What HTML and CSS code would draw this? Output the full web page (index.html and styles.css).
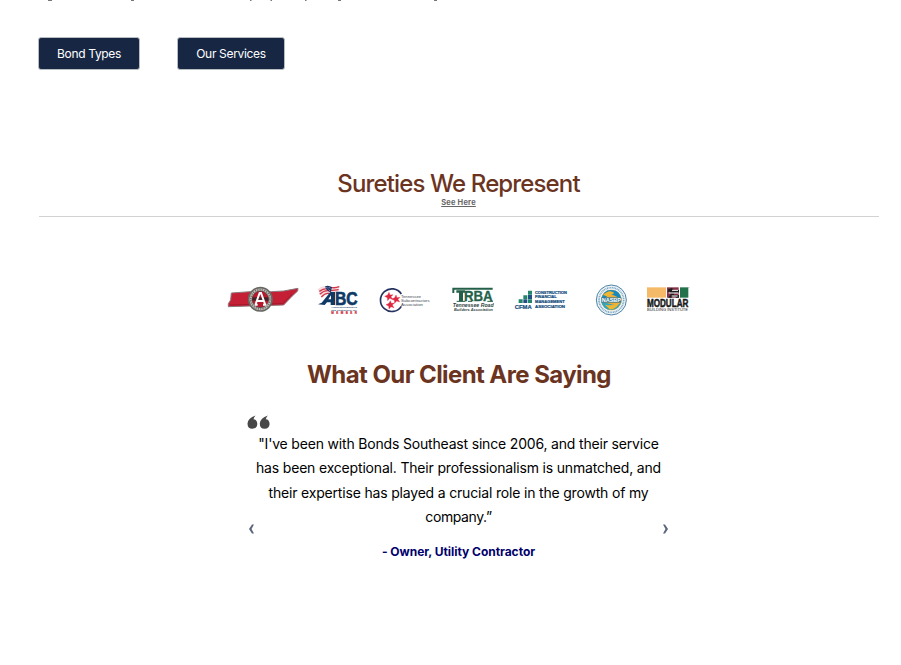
FILE: index.html
```html
<!DOCTYPE html>
<html lang="en">
<head>
<meta charset="utf-8">
<title>Bonds Southeast</title>
<link rel="stylesheet" href="styles.css">
</head>
<body>
<main class="page">
  <svg class="descenders" width="420" height="1" viewBox="39 0 420 1" aria-hidden="true"><path d="M48 .5h4M131 .5h3M250 .5h1.500M270.500 .5h1.500M305 .5h1.500M338 .5h3M434 .5h3" stroke="#777"/></svg>
  <div class="actions">
    <a class="button types">Bond Types</a>
    <a class="button services">Our Services</a>
  </div>
  <section class="sureties">
    <h2 class="sureties-title">Sureties We Represent</h2>
    <a class="see-here">See Here</a>
  </section>
  <div class="logos">
    <svg width="82" height="40" viewBox="18 15 246 120">
      <path d="M34 54L91 50L155 50L191 48L234 40L233 48L216 64L191 90L25 95L25 86L32 75Z" fill="#c51f35" stroke="#8b7579" stroke-width="3"/>
      <path d="M31 90L188 86L217 57" fill="none" stroke="#a1182b" stroke-width="3"/>
      <circle cx="121" cy="73" r="35" fill="#c8c3be" stroke="#686862" stroke-width="5"/>
      <circle cx="121" cy="73" r="29" fill="none" stroke="#77736e" stroke-width="5" stroke-dasharray="4 3"/>
      <circle cx="121" cy="73" r="25" fill="#b7182c" stroke="#444" stroke-width="2"/>
      <path d="M97 72h48" stroke="#412329" stroke-width="10"/>
      <path d="M104 89h9M107 87L119 54h4L135 87M129 89h10M112 78h18" fill="none" stroke="#fff" stroke-width="6"/>
    </svg>
    <svg width="60" height="40" viewBox="-6 15 180 120">
      <path d="M23 43Q38 28 56 35T88 32L84 54Q68 49 55 55T36 68Z" fill="#f4dce0"/>
      <path d="M28 49Q45 37 61 43M29 58Q45 44 59 48M34 66Q47 52 59 56M62 37Q75 40 88 35M62 47L86 44" fill="none" stroke="#d23648" stroke-width="4"/>
      <path d="M45 34Q56 29 66 37L62 53L50 44Z" fill="#1d3769"/>
      <path d="M50 37l3 3M57 37l3 3M56 44l3 3" stroke="#fff" stroke-width="2"/>
      <path d="M24 88L35 83L61 51H75V90H62V82H51L44 90ZM63 61L55 73H63Z" fill="#103966" fill-rule="evenodd"/>
      <text class="logo-sans" x="75" y="89" font-size="54" textLength="68" lengthAdjust="spacingAndGlyphs" fill="#103966" stroke="#103966" stroke-width="2">BC</text>
      <text class="logo-sans" x="64" y="99" font-size="7" textLength="77" lengthAdjust="spacingAndGlyphs" fill="#365477">Associated Builders</text>
      <text class="logo-sans" x="64" y="108" font-size="7" textLength="78" lengthAdjust="spacingAndGlyphs" fill="#365477">and Contractors, Inc.</text>
      <text class="logo-sans" x="64" y="118" font-size="9" textLength="77" fill="#d41f37" stroke="#d41f37" stroke-width=".5">MEMBER</text>
    </svg>
    <svg width="72" height="40" viewBox="-6 15 216 120">
      <path d="M94 57A34 34 0 1 0 94 94" fill="none" stroke="#25315e" stroke-width="5"/>
      <g fill="#df2640" stroke="#df2640"><path d="M57 52l3 8 9-1-6 6 5 8-9-3-6 7-1-9-8-4 9-4z"/><path d="M78 60l3 8 9-1-6 6 5 8-9-3-6 7-1-9-8-4 9-4z"/><path d="M61 77l3 8 9-1-6 6 5 8-9-3-6 7-1-9-8-4 9-4z"/></g>
      <g class="logo-plain" font-size="11" fill="#444c54"><text x="93" y="69" textLength="60" lengthAdjust="spacingAndGlyphs">Tennessee</text><text x="93" y="81" textLength="86" lengthAdjust="spacingAndGlyphs">Subcontractors</text><text x="93" y="93" textLength="66" lengthAdjust="spacingAndGlyphs">Association</text></g>
    </svg>
    <svg width="65" height="40" viewBox="0 15 195 120">
      <path d="M37 38H158V44H43V54H37ZM57 79V53H49V46H75V53H69V79Z" fill="#245f49"/>
      <text class="logo-sans" x="72" y="79" font-size="46" textLength="86" lengthAdjust="spacingAndGlyphs" fill="#245f49" stroke="#245f49">RBA</text>
      <path d="M50 79H76M84 79H96M142 79H159" stroke="#245f49" stroke-width="3"/>
      <g class="logo-sans logo-italic" fill="#33453f"><text x="38" y="95" font-size="15" textLength="123" lengthAdjust="spacingAndGlyphs">Tennessee Road</text><text x="42" y="109" font-size="11" textLength="117" lengthAdjust="spacingAndGlyphs">Builders Association</text></g>
    </svg>
    <svg width="76" height="40" viewBox="0 15 228 120">
      <path d="M41 73h12v11H41zM55 61h12v11H55zM69 47h12v12H69zM69 73h12v11H69z" fill="#23866b"/>
      <path d="M55 73h12v11H55zM69 60h12v12H69z" fill="#204d84"/>
      <g class="logo-sans" fill="#12497a" stroke="#12497a" stroke-width=".6"><text x="29" y="102" font-size="18" textLength="51" lengthAdjust="spacingAndGlyphs">CFMA</text><g font-size="12"><text x="90" y="56" textLength="96" lengthAdjust="spacingAndGlyphs">CONSTRUCTION</text><text x="90" y="70" textLength="65" lengthAdjust="spacingAndGlyphs">FINANCIAL</text><text x="90" y="84" textLength="89" lengthAdjust="spacingAndGlyphs">MANAGEMENT</text><text x="90" y="98" textLength="90" lengthAdjust="spacingAndGlyphs">ASSOCIATION</text></g></g>
    </svg>
    <svg width="56" height="40" viewBox="-12 15 168 120">
      <circle cx="79" cy="75" r="45" fill="#eef5f8" stroke="#4a82aa" stroke-width="3"/>
      <circle cx="79" cy="75" r="37" fill="none" stroke="#7fa6c0" stroke-width="5" stroke-dasharray="3 2"/>
      <circle cx="79" cy="75" r="31" fill="#f0ac35"/>
      <path d="M49 72Q55 44 79 45Q105 45 109 72L91 63Q73 51 62 69Z" fill="#1689bd"/>
      <path d="M49 80Q54 104 79 105Q103 102 109 80Q98 96 77 87Z" fill="#31a4c1"/>
      <path d="M54 60Q73 41 88 54L70 65ZM60 89Q86 96 104 79Q96 105 74 103Z" fill="#f0b62f"/>
      <path d="M49 67H109V83H49Z" fill="#397b94"/>
      <text class="logo-sans" x="50" y="81" font-size="17" textLength="58" lengthAdjust="spacingAndGlyphs" fill="#fff">NASBP</text>
    </svg>
    <svg width="55" height="40" viewBox="156 15 165 120">
      <path d="M186 37h57v31h-57z" fill="#f5ba68"/><path d="M246 37h35v31h-35z" fill="#863047"/><path d="M285 37h25v31h-25z" fill="#24724c"/>
      <path d="M250 43l11-4 5 6h16v8h-15v7h15v8h-8l-7-5-8 5h-10l8-8-2-10h-7z" fill="#1d1b1c"/>
      <path d="M251 54h29M261 46h18M260 63h18" stroke="#fff" stroke-width="3"/>
      <text class="logo-sans" x="186" y="97" font-size="34" textLength="124" lengthAdjust="spacingAndGlyphs" fill="#181818" stroke="#181818" stroke-width="1.500">MODULAR</text>
      <text class="logo-plain" x="186" y="108" font-size="9" textLength="123" lengthAdjust="spacingAndGlyphs" fill="#222">BUILDING INSTITUTE</text>
      <circle cx="312" cy="38" r="1" fill="#444"/>
    </svg>
  </div>
  <section class="testimonials">
    <h2 class="testimonial-title">What Our Client Are Saying</h2>
    <svg class="quote-mark" width="24" height="16" viewBox="0 0 24 16"><path d="M8.500 .5Q1 3 .5 8.500Q.5 13.800 5.300 13.800Q10 13.500 10.300 9Q10 4.500 6.500 4.300Q7 2 8.500 .5Z" fill="#484848"/><path d="M20.800 .5Q13.300 3 12.800 8.500Q12.800 13.800 17.600 13.800Q22.300 13.500 22.600 9Q22.300 4.500 18.800 4.300Q19.300 2 20.800 .5Z" fill="#484848"/></svg>
    <blockquote>"I've been with Bonds Southeast since 2006, and their service<br>has been exceptional. Their professionalism is unmatched, and<br>their expertise has played a crucial role in the growth of my<br><span class="last-line">company.”</span></blockquote>
    <div class="carousel-controls">
      <svg width="7" height="10" viewBox="0 0 7 10"><path d="M6 .5H4L1 5L4 9.500H6L3.500 5Z" fill="#59657b"/></svg>
      <svg width="7" height="10" viewBox="0 0 7 10"><path d="M0 .5H2L5 5L2 9.500H0L2.500 5Z" fill="#59657b"/></svg>
    </div>
    <p class="client">- Owner, Utility Contractor</p>
  </section>
</main>
</body>
</html>
```
FILE: styles.css
```css
*{box-sizing:border-box}
body{margin:0;background:#fff;font-family:Inter,"Liberation Sans",sans-serif;color:#000}
.page{width:841px;margin-left:38px;padding-left:1px;height:665px;overflow:hidden}
.descenders{display:block}
.actions{display:flex;gap:38px;margin:36px 0 0 -1px}
.button{height:33px;border:1px solid #b8bdc2;border-radius:3px;background:#172743;color:#fff;font-size:12px;line-height:31px;letter-spacing:-.33px;text-align:center}
.types{width:102px}
.services{width:108px;margin-left:-1px}
.sureties{height:147px;padding-top:100px;border-bottom:1px solid #d3d3d3;text-align:center}
.sureties-title{height:28px;margin:0 1px 0 0;color:#6b341f;font-size:24px;font-weight:450;line-height:28px;letter-spacing:-.86px}
.see-here{display:block;margin-right:1px;color:#666;font-size:7.500px;font-weight:700;line-height:9px;letter-spacing:.2px;text-decoration:underline}
.logos{display:flex;justify-content:center;margin-top:63px}
.logo-sans{font-family:"Liberation Sans",sans-serif;font-weight:700}
.logo-plain{font-family:"Liberation Sans",sans-serif}
.logo-italic{font-style:italic}
.testimonials{width:424px;margin:40px auto 0;text-align:center}
.testimonial-title{margin:0;color:#6b341f;font-size:24px;line-height:30px;letter-spacing:-.58px}
.quote-mark{display:block;margin:25px 0 0}
blockquote{margin:1px 1px 0 0;font-size:14px;line-height:24.4px;letter-spacing:-.18px;white-space:nowrap}
.last-line{letter-spacing:-.4px}
.carousel-controls{display:flex;justify-content:space-between;height:10px;margin:-6px 1px 0}
.client{margin:9px 1px 0 0;color:#00006b;font-size:12px;font-weight:700;line-height:18px;letter-spacing:-.04px}
```
